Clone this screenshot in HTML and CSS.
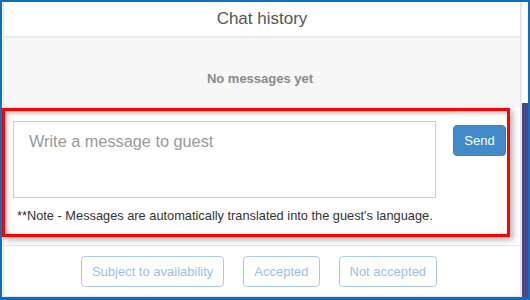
FILE: index.html
```html
<!DOCTYPE html>
<html>
<head>
<meta charset="utf-8">
<link rel="stylesheet" href="styles.css">
</head>
<body>
<div class="frame">
  <div class="gutter"></div>
  <div class="modal">
    <div class="header">Chat history</div>
    <div class="messages">No messages yet</div>
    <div class="composer">
      <div class="row">
        <textarea class="input" placeholder="Write a message to guest"></textarea>
        <button class="send">Send</button>
      </div>
      <p class="note">**Note - Messages are automatically translated into the guest's language.</p>
    </div>
    <div class="footer">
      <button class="status">Subject to availability</button>
      <button class="status">Accepted</button>
      <button class="status">Not accepted</button>
    </div>
  </div>
  <div class="side"><div class="side-top"></div><div class="side-purple"></div></div>
</div>
</body>
</html>
```

FILE: styles.css
```css
* { box-sizing: border-box; }
html, body { margin: 0; padding: 0; background: #fff; }
body { font-family: "Liberation Sans", Arial, sans-serif; }

.frame {
  width: 530px;
  height: 300px;
  border: 2px solid #0b6fc1;
  border-bottom-width: 3px;
  display: flex;
  background: #fff;
  overflow: hidden;
}
.gutter { width: 1px; flex: none; background: #fff; }
.modal {
  width: 519px;
  flex: none;
  height: 100%;
  border-left: 1px solid #e3e3e3;
  border-right: 2px solid #e6e6e6;
  border-bottom: 1px solid #e6e6e6;
  display: flex;
  flex-direction: column;
  background: #fff;
}
.header {
  height: 36px;
  border-bottom: 2px solid #ececec;
  text-align: center;
  font-size: 17px;
  line-height: 33px;
  color: #555;
}
.messages {
  height: 70px;
  background: #f7f7f7;
  text-align: center;
  font-size: 13px;
  font-weight: bold;
  color: #8a8a8a;
  padding: 33px 4px 0 0;
  line-height: 15px;
}
.composer {
  position: relative;
  margin-left: -2px;
  width: 508px;
  height: 129px;
  border: 3px solid #ff0000;
  background: #fff;
  padding: 10px 0 0 8px;
  box-shadow: inset 2px 2px 5px rgba(0,0,0,0.28), 3px 3px 6px rgba(0,0,0,0.3);
}
.row { display: flex; align-items: flex-start; }
.input {
  width: 423px;
  height: 77px;
  border: 1px solid #cccccc;
  padding: 10px 15px;
  font-family: "Liberation Sans", Arial, sans-serif;
  font-size: 16.3px;
  line-height: 18px;
  resize: none;
  margin: 0;
  outline: none;
}
.input::placeholder { color: #999; }
.send {
  margin: 4px 0 0 17px;
  width: 53px;
  height: 31px;
  border: 1px solid #3b80c0;
  border-radius: 4px;
  background: #428bca;
  color: #fff;
  font-family: "Liberation Sans", Arial, sans-serif;
  font-size: 13px;
  padding: 0;
}
.note {
  margin: 11px 0 0 4px;
  font-size: 12.8px;
  line-height: 14px;
  color: #333;
}
.footer {
  margin-top: 8px;
  border-top: 1px solid #e5e5e5;
  padding: 10px 6px 0 0;
  display: flex;
  justify-content: center;
  gap: 19px;
}
.status {
  height: 31px;
  padding: 0 10px;
  border: 1px solid #a9c8f6;
  border-radius: 4px;
  background: #fff;
  color: #9dbcf0;
  font-family: "Liberation Sans", Arial, sans-serif;
  font-size: 13px;
}
.side { width: 6px; flex: none; display: flex; flex-direction: column; }
.side-top { height: 101px; background: #fff; }
.side-purple { flex: 1; background: #4f4587; }
```
